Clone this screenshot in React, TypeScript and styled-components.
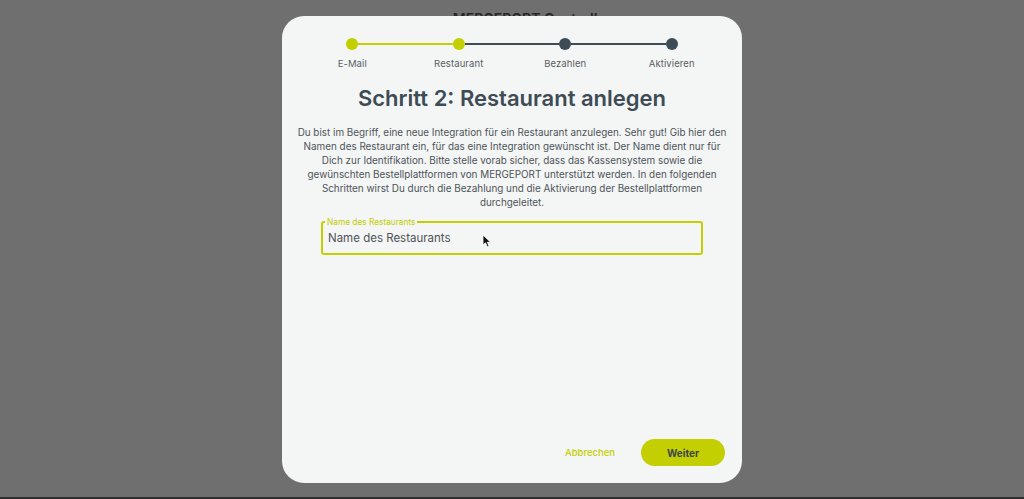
import React from "react";
import styled, { createGlobalStyle } from "styled-components";

const lime = "#c3cf00";
const slate = "#3d4c55";
const font = `Inter, "Noto Sans", sans-serif`;

const Global = createGlobalStyle`
  html, body { margin: 0; padding: 0; }
  body {
    background: #6f6f6f;
    font-family: ${font};
    width: 1024px;
    height: 499px;
    overflow: hidden;
  }
`;

const Page = styled.div`
  position: relative;
  width: 1024px;
  height: 499px;
  border-bottom: 2px solid #2e2e2e;
  box-sizing: border-box;
`;

const BackTitle = styled.div`
  padding-top: 10px;
  text-align: center;
  font-size: 14px;
  font-weight: 600;
  color: #262626;
  padding-left: 40px;
`;

const Modal = styled.div`
  position: absolute;
  left: 282px;
  top: 16px;
  width: 460px;
  height: 467px;
  box-sizing: border-box;
  background: #f4f5f5;
  border-radius: 22px;
  padding: 22px 17px 17px;
  display: flex;
  flex-direction: column;
`;

const Stepper = styled.div`
  display: grid;
  grid-template-columns: repeat(4, 1fr);
`;

const Step = styled.div`
  display: flex;
  flex-direction: column;
  align-items: center;
`;

const Track = styled.div`
  display: flex;
  align-items: center;
  width: 100%;
  height: 12px;
`;

const Segment = styled.div<{ $color: string }>`
  flex: 1;
  height: 2.5px;
  background: ${(p) => p.$color};
`;

const Dot = styled.div<{ $active: boolean }>`
  width: 12px;
  height: 12px;
  border-radius: 50%;
  background: ${(p) => (p.$active ? lime : slate)};
  flex: none;
`;

const StepLabel = styled.div`
  margin-top: 8px;
  font-size: 9.5px;
  color: #595f63;
  letter-spacing: 0.1px;
`;

const Title = styled.h1`
  margin: 16px 0 0;
  text-align: center;
  font-size: 22px;
  font-weight: 600;
  color: ${slate};
`;

const Text = styled.p`
  margin: 14px -4px 0;
  text-align: center;
  font-size: 9.9px;
  line-height: 14px;
  color: #4c5458;
  white-space: nowrap;
`;

const Field = styled.fieldset`
  margin: 9px 22px 0 22px;
  padding: 0 5px 7px;
  border: 2px solid ${lime};
  border-radius: 3px;
`;

const Legend = styled.legend`
  font-size: 8.3px;
  color: ${lime};
  padding: 0 2px;
  margin-left: -3px;
  line-height: 8px;
`;

const Input = styled.input`
  width: 100%;
  border: none;
  outline: none;
  background: transparent;
  font-family: ${font};
  font-size: 11.5px;
  color: #4e5457;
  padding: 3px 0 0;
  &::placeholder { color: #4e5457; }
`;

const Footer = styled.div`
  margin-top: auto;
  display: flex;
  justify-content: flex-end;
  align-items: center;
  gap: 26px;
`;

const TextButton = styled.button`
  border: none;
  background: none;
  color: ${lime};
  font-family: ${font};
  font-size: 9.5px;
  font-weight: 500;
  cursor: pointer;
  padding: 0;
`;

const PrimaryButton = styled.button`
  border: none;
  background: ${lime};
  color: #3b4549;
  font-family: ${font};
  font-size: 10px;
  font-weight: 700;
  width: 84px;
  height: 27px;
  border-radius: 14px;
  cursor: pointer;
`;

const Cursor = styled.svg`
  position: absolute;
  left: 482px;
  top: 234px;
`;

const steps = [
  { label: "E-Mail", active: true },
  { label: "Restaurant", active: true },
  { label: "Bezahlen", active: false },
  { label: "Aktivieren", active: false },
];

const lines = [
  "Du bist im Begriff, eine neue Integration für ein Restaurant anzulegen. Sehr gut! Gib hier den",
  "Namen des Restaurant ein, für das eine Integration gewünscht ist. Der Name dient nur für",
  "Dich zur Identifikation. Bitte stelle vorab sicher, dass das Kassensystem sowie die",
  "gewünschten Bestellplattformen von MERGEPORT unterstützt werden. In den folgenden",
  "Schritten wirst Du durch die Bezahlung und die Aktivierung der Bestellplattformen",
  "durchgeleitet.",
];

export default function App() {
  return (
    <>
      <Global />
      <Page>
        <BackTitle>MERGEPORT Controller</BackTitle>
        <Modal>
          <Stepper>
            {steps.map((s, i) => {
              const left =
                i === 0 ? "transparent" : s.active ? lime : slate;
              const right =
                i === steps.length - 1
                  ? "transparent"
                  : steps[i + 1].active
                  ? lime
                  : slate;
              return (
                <Step key={s.label}>
                  <Track>
                    <Segment $color={left} />
                    <Dot $active={s.active} />
                    <Segment $color={right} />
                  </Track>
                  <StepLabel>{s.label}</StepLabel>
                </Step>
              );
            })}
          </Stepper>
          <Title>Schritt 2: Restaurant anlegen</Title>
          <Text>
            {lines.map((l, i) => (
              <React.Fragment key={i}>
                {l}
                {i < lines.length - 1 && <br />}
              </React.Fragment>
            ))}
          </Text>
          <Field>
            <Legend>Name des Restaurants</Legend>
            <Input placeholder="Name des Restaurants" />
          </Field>
          <Footer>
            <TextButton>Abbrechen</TextButton>
            <PrimaryButton>Weiter</PrimaryButton>
          </Footer>
        </Modal>
        <Cursor width="10" height="14" viewBox="0 0 10 14">
          <path d="M1 1 L1 11 L3.5 8.8 L5.3 12.8 L7 12 L5.3 8.2 L8.6 8.2 Z" fill="#111" stroke="#fff" strokeWidth="0.8" />
        </Cursor>
      </Page>
    </>
  );
}
